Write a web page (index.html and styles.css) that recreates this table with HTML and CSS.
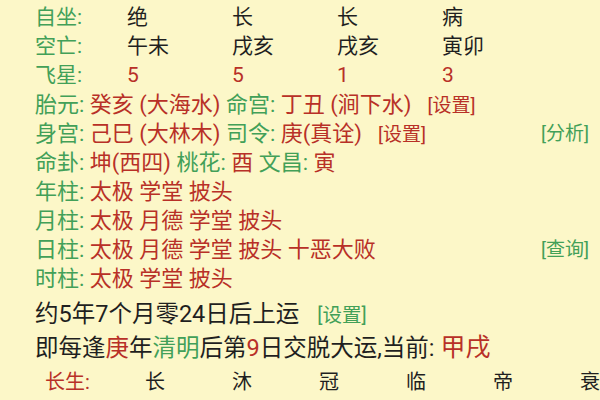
FILE: index.html
```html
<!DOCTYPE html>
<html lang="zh">
<head>
<meta charset="utf-8">
<link rel="stylesheet" href="styles.css">
</head>
<body>
<div class="page">
  <div class="grid">
    <span class="g">自坐:</span><span>绝</span><span>长</span><span>长</span><span>病</span>
    <span class="g">空亡:</span><span>午未</span><span>戌亥</span><span>戌亥</span><span>寅卯</span>
    <span class="g">飞星:</span><span class="r">5</span><span class="r">5</span><span class="r">1</span><span class="r">3</span>
  </div>
  <div class="row"><span class="g">胎元:</span> <span class="r">癸亥 (大海水)</span> <span class="g">命宫:</span> <span class="r">丁丑 (涧下水)</span><span class="r link">[设置]</span></div>
  <div class="row"><span class="g side">[分析]</span><span class="g">身宫:</span> <span class="r">己巳 (大林木)</span> <span class="g">司令:</span> <span class="r">庚(真诠)</span><span class="r link">[设置]</span></div>
  <div class="row"><span class="g">命卦:</span> <span class="r">坤(西四)</span> <span class="g">桃花:</span> <span class="r">酉</span> <span class="g">文昌:</span> <span class="r">寅</span></div>
  <div class="row"><span class="g">年柱:</span> <span class="r">太极 学堂 披头</span></div>
  <div class="row"><span class="g">月柱:</span> <span class="r">太极 月德 学堂 披头</span></div>
  <div class="row"><span class="g side">[查询]</span><span class="g">日柱:</span> <span class="r">太极 月德 学堂 披头 十恶大败</span></div>
  <div class="row"><span class="g">时柱:</span> <span class="r">太极 学堂 披头</span></div>
  <div class="line first">约5年7个月零24日后上运<span class="g small">[设置]</span></div>
  <div class="line">即每逢<span class="r">庚</span>年<span class="g">清明</span>后第<span class="r">9</span>日交脱大运,当前: <span class="r bigger">甲戌</span></div>
  <div class="cs">
    <span class="r">长生:</span><span>长</span><span>沐</span><span>冠</span><span>临</span><span>帝</span><span>衰</span>
  </div>
</div>
</body>
</html>
```
FILE: styles.css
```css
html, body {
  margin: 0;
  padding: 0;
  background: #fcf7c8;
}
body {
  font-family: Roboto, "Noto Sans CJK SC", sans-serif;
  color: #1f1f1f;
  font-size: 21px;
  width: 600px;
  height: 400px;
  overflow: hidden;
}
.page {
  padding: 3px 11px 0 35px;
}
.g { color: #42a058; }
.r { color: #b83027; }
.grid {
  display: grid;
  grid-template-columns: 92px 105px 105px 105px 105px;
  grid-auto-rows: 29px;
  line-height: 29px;
}
.row {
  height: 29px;
  line-height: 29px;
  font-size: 22px;
  white-space: nowrap;
}
.link { margin-left: 16px; font-size: 19px; }
.side { float: right; font-size: 19px; }
.line {
  font-size: 23.5px;
  height: 34px;
  line-height: 34px;
  white-space: nowrap;
}
.line.first { margin-top: 4px; }
.small { font-size: 19.5px; margin-left: 18px; }
.bigger { font-size: 25px; }
.cs {
  display: grid;
  grid-template-columns: 100px 87px 87px 87px 87px 87px 87px;
  padding-left: 10px;
  font-size: 20px;
  line-height: 34px;
}
```
